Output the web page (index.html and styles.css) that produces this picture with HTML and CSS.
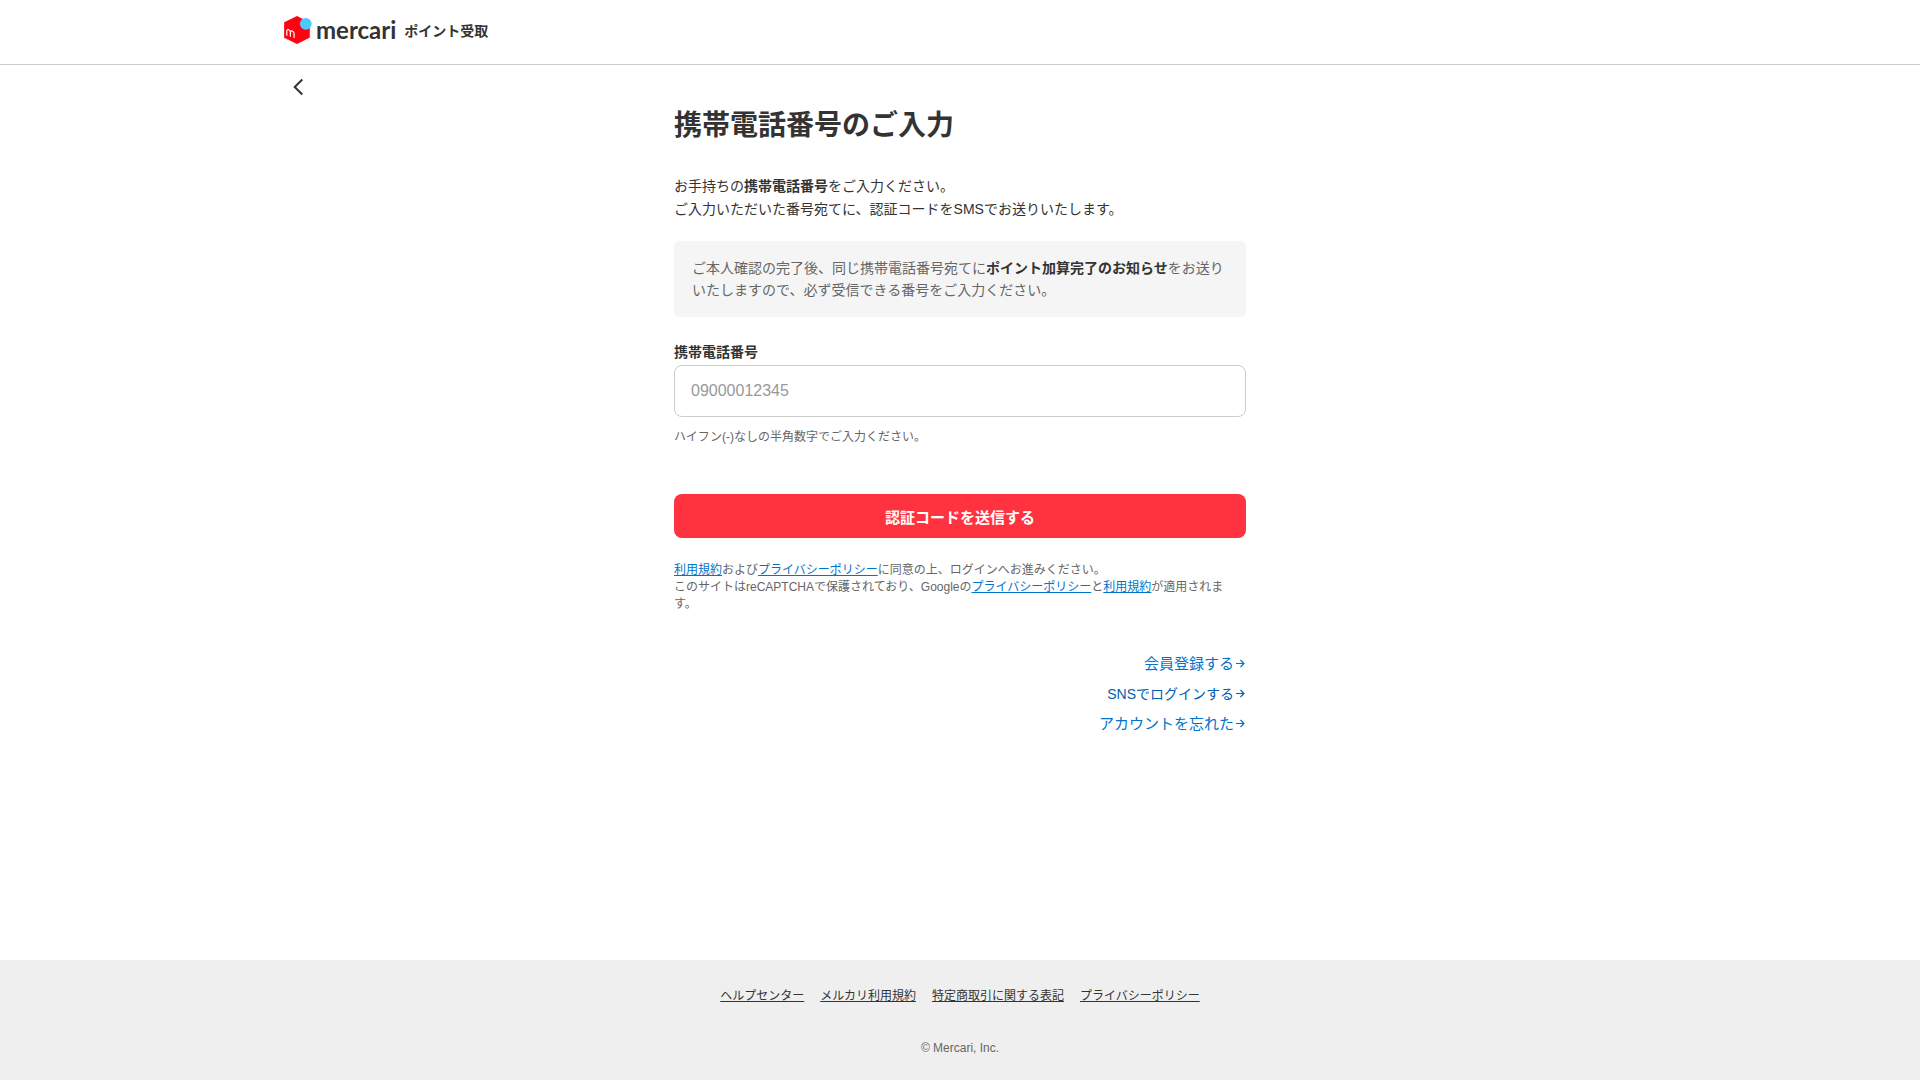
FILE: index.html
```html
<!DOCTYPE html>
<html lang="ja">
<head>
<meta charset="utf-8">
<meta name="viewport" content="width=device-width, initial-scale=1">
<title>携帯電話番号のご入力</title>
<link rel="stylesheet" href="styles.css">
</head>
<body>
<header class="header">
  <div class="container header-inner">
    <a class="brand" href="#">
      <svg class="brand-mark" width="28" height="28" viewBox="0 0 28 28" aria-hidden="true">
        <path d="M13 0.3 25.6 6.6V21.4L13 27.8 0.2 21.6V6.6Z" fill="#ff0211" stroke="#ff0211" stroke-width=".5" stroke-linejoin="round"/>
        <circle cx="21.8" cy="7.8" r="5.9" fill="#4dc9ff"/>
        <path d="M2.8 19.2V15.2Q3 13.1 4.7 13.7Q6.3 14.3 6.4 16.3V20.2M6.4 16.3Q6.7 14.2 8.3 15Q10 15.8 10.1 17.8V21.4" fill="none" stroke="#fff" stroke-width="1.2" stroke-linecap="round"/>
      </svg>
      <span class="brand-name">mercari</span>
    </a>
    <span class="service">ポイント受取</span>
  </div>
</header>
<div class="container back-row">
  <button class="back" type="button" aria-label="戻る">
    <svg width="24" height="24" viewBox="0 0 24 24" aria-hidden="true"><path d="M16.3 4.5 8.7 12l7.6 7.5" fill="none" stroke="#333" stroke-width="2"/></svg>
  </button>
</div>
<main class="main">
  <h1 class="title">携帯電話番号のご入力</h1>
  <p class="lead">お手持ちの<b>携帯電話番号</b>をご入力ください。<br>ご入力いただいた番号宛てに、認証コードをSMSでお送りいたします。</p>
  <p class="notice">ご本人確認の完了後、同じ携帯電話番号宛てに<b>ポイント加算完了のお知らせ</b>をお送りいたしますので、必ず受信できる番号をご入力ください。</p>
  <form class="form">
    <label class="label" for="phone">携帯電話番号</label>
    <input class="input" id="phone" type="tel" placeholder="09000012345" aria-describedby="phone-hint">
    <p class="hint" id="phone-hint">ハイフン(-)なしの半角数字でご入力ください。</p>
    <button class="submit" type="submit">認証コードを送信する</button>
  </form>
  <p class="terms"><a href="#">利用規約</a>および<a href="#">プライバシーポリシー</a>に同意の上、ログインへお進みください。<br>このサイトはreCAPTCHAで保護されており、Googleの<a href="#">プライバシーポリシー</a>と<a href="#">利用規約</a>が適用されます。</p>
  <nav class="links">
    <a class="link" href="#">会員登録する<svg class="arrow" viewBox="0 0 12 12" aria-hidden="true"><path d="M2 5.5h8M6.5 2 10 5.5 6.5 9"/></svg></a>
    <a class="link link-sns" href="#">SNSでログインする<svg class="arrow" viewBox="0 0 12 12" aria-hidden="true"><path d="M2 5.5h8M6.5 2 10 5.5 6.5 9"/></svg></a>
    <a class="link" href="#">アカウントを忘れた<svg class="arrow" viewBox="0 0 12 12" aria-hidden="true"><path d="M2 5.5h8M6.5 2 10 5.5 6.5 9"/></svg></a>
  </nav>
</main>
<footer class="footer">
  <nav class="footer-links">
    <a href="#">ヘルプセンター</a>
    <a href="#">メルカリ利用規約</a>
    <a href="#">特定商取引に関する表記</a>
    <a href="#">プライバシーポリシー</a>
  </nav>
  <small class="copyright">© Mercari, Inc.</small>
</footer>
</body>
</html>
```
FILE: styles.css
```css
* { box-sizing: border-box; }
body {
  margin: 0;
  min-height: 100vh;
  display: flex;
  flex-direction: column;
  background: #fff;
  color: #333;
  font-family: "Liberation Sans", "Noto Sans CJK JP", sans-serif;
  font-size: 14px;
  line-height: 22px;
}
h1, p { margin: 0; }
.container { width: 100%; max-width: 1400px; margin: 0 auto; padding: 0 24px; }
.header { border-bottom: 1px solid #ccc; }
.header-inner { display: flex; align-items: center; gap: 8px; height: 64px; padding-bottom: 4px; }
.brand { display: flex; align-items: center; gap: 4px; color: #333; text-decoration: none; }
.brand-mark { display: block; }
.brand-name { font: bold 24px/28px Lato, sans-serif; }
.service { padding-top: 2px; font-weight: bold; }
.back-row { display: flex; height: 36px; padding-top: 10px; }
.back { display: flex; padding: 0; margin-left: 2px; width: 24px; height: 24px; border: 0; background: none; cursor: pointer; }
.main { width: 100%; max-width: 604px; margin: 0 auto; padding: 0 16px; flex: 1; }
.title { margin-top: 4px; font-size: 28px; line-height: 42px; }
.lead { margin: 28px 0 20px; line-height: 23px; }
.notice { padding: 16px 18px; border-radius: 6px; background: #f5f5f5; color: #666; }
.notice b { color: #333; }
.form { display: flex; flex-direction: column; margin-top: 24px; }
.label { font-weight: bold; margin-bottom: 2px; }
.input { height: 52px; padding: 0 16px; border: 1px solid #ccc; border-radius: 8px; background: #fff; color: #333; font: 16px "Liberation Sans", sans-serif; }
.input::placeholder { color: #999; opacity: 1; }
.hint { margin-top: 12px; font-size: 12px; line-height: 17px; color: #666; }
.submit { margin-top: 48px; height: 44px; border: 0; border-radius: 8px; background: #ff333f; color: #fff; font-family: inherit; font-size: 15px; font-weight: bold; cursor: pointer; }
.terms { margin-top: 24px; font-size: 12px; line-height: 17px; color: #666; }
.terms a { color: #0073cc; }
.links { display: flex; flex-direction: column; align-items: flex-end; gap: 8px; margin-top: 40px; }
.link { display: flex; align-items: center; color: #0073cc; font-size: 15px; line-height: 22px; text-decoration: none; }
.link-sns { color: #0060b5; font-size: 14px; }
.arrow { width: 12px; height: 12px; fill: none; stroke: currentColor; stroke-width: 1.2; }
.footer { display: flex; flex-direction: column; align-items: center; gap: 36px; padding: 28px 16px 24px; background: #efefef; font-size: 12px; line-height: 16px; }
.footer-links { display: flex; flex-wrap: wrap; gap: 16px; }
.footer-links a { color: #333; }
.copyright { font-size: 12px; color: #666; }
```
